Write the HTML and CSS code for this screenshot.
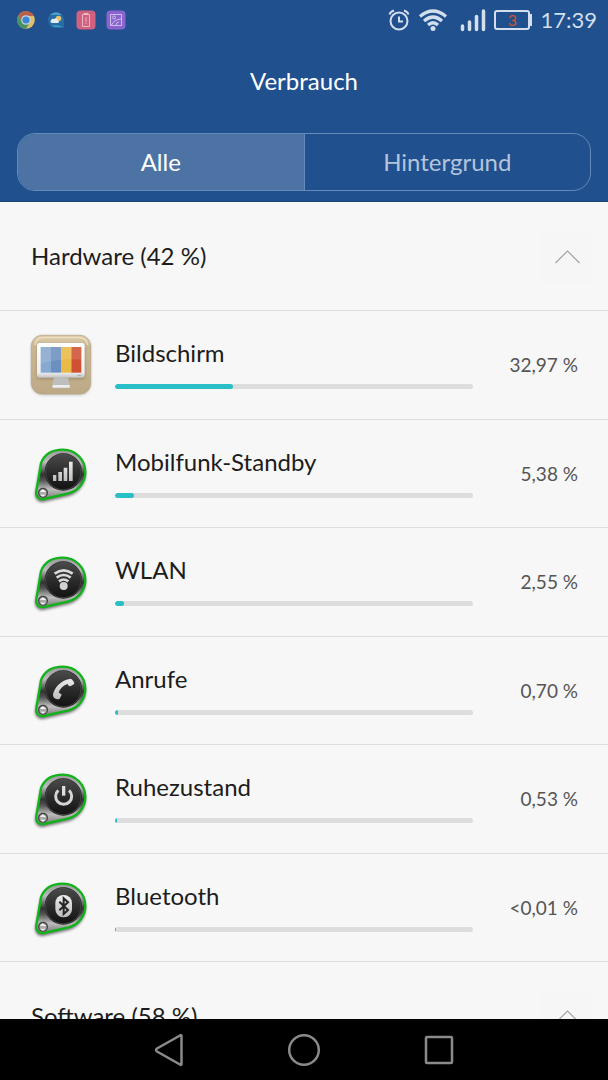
FILE: index.html
```html
<!DOCTYPE html>
<html lang="de">
<head>
<meta charset="utf-8">
<meta name="viewport" content="width=device-width, initial-scale=1">
<title>Verbrauch</title>
<link rel="stylesheet" href="styles.css">
</head>
<body>
<svg class="defs" aria-hidden="true">
  <defs>
    <linearGradient id="metal" x1="0" y1="0" x2="0" y2="1">
      <stop offset="0" stop-color="#999"/><stop offset=".25" stop-color="#bbb"/><stop offset=".5" stop-color="#333"/><stop offset=".62" stop-color="#555"/><stop offset=".8" stop-color="#bdbdbd"/><stop offset="1" stop-color="#777"/>
    </linearGradient>
    <linearGradient id="face" x1="0" y1="0" x2="0" y2="1">
      <stop offset="0" stop-color="#4a4a4a"/><stop offset=".5" stop-color="#2c2c2c"/><stop offset="1" stop-color="#121212"/>
    </linearGradient>
    <linearGradient id="glyph" x1="0" y1="0" x2="0" y2="1">
      <stop offset="0" stop-color="#ececec"/><stop offset="1" stop-color="#bcbcbc"/>
    </linearGradient>
    <linearGradient id="wood" x1="0" y1="0" x2="0" y2="1">
      <stop offset="0" stop-color="#e0cfad"/><stop offset=".2" stop-color="#c9b794"/><stop offset="1" stop-color="#bda985"/>
    </linearGradient>
    <linearGradient id="frame" x1="0" y1="0" x2="0" y2="1">
      <stop offset="0" stop-color="#fff"/><stop offset=".85" stop-color="#eee"/><stop offset="1" stop-color="#c4c4c4"/>
    </linearGradient>
    <filter id="soft" x="-20%" y="-20%" width="140%" height="140%"><feGaussianBlur stdDeviation="5"/></filter>
    <symbol id="drop" viewBox="0 0 240 240">
      <path d="M62 86C73 59 98 46 129 46C168 46 197 76 197 114C197 145 176 173 145 182L70 199C53 201 43 188 46 172Z" fill="#000" opacity=".55" filter="url(#soft)" transform="translate(0 5)"/>
      <path d="M63 88C73 61 98 47 129 47C167 47 196 77 196 114C196 144 176 170 145 178L72 195C56 198 46 188 49 172Z" fill="url(#metal)" stroke="#10b41a" stroke-width="7"/>
      <circle cx="130" cy="114" r="56" fill="#222"/>
      <circle cx="130" cy="114" r="53" fill="url(#face)" stroke="#555" stroke-width="2"/>
      <circle cx="69" cy="176" r="15" fill="#404040"/>
      <circle cx="69" cy="177" r="11" fill="#aaa"/>
      <path d="M60 174l8-8 11 9-11-2z" fill="#fff"/><path d="M61 182h15l-7 6z" fill="#f4f4f4"/>
    </symbol>
    <symbol id="chevron" viewBox="0 0 53 53">
      <path d="M14.500 33L26.500 21L38.500 33" fill="none" stroke="#a5a5a5" stroke-width="1.200"/>
    </symbol>
  </defs>
</svg>

<header class="header">
  <div class="status">
    <div class="status-apps">
      <svg viewBox="0 0 20 20" class="app-icon">
        <circle cx="10" cy="10" r="8.800" fill="#dfc068"/>
        <path d="M2.200 5.500A8.800 8.800 0 0 1 17.800 6H10L6.100 12.300Z" fill="#b96149"/>
        <path d="M2.200 5.500A8.800 8.800 0 0 0 10 18.800L13.900 12.300H6.100Z" fill="#4a9361"/>
        <circle cx="10" cy="10" r="4.800" fill="#c4d4e4"/><circle cx="10" cy="10" r="3.600" fill="#3c86d2"/>
      </svg>
      <svg viewBox="0 0 20 20" class="app-icon">
        <path d="M10 2A8 8 0 1 0 10 18H18V10A8 8 0 0 0 10 2Z" fill="#246da5"/>
        <path d="M4 5Q10 0 16 5Q10 4 4 5Z" fill="#58add5"/>
        <path d="M5 16Q11 14 17 17H9Z" fill="#3ba3ca"/>
        <circle cx="12.500" cy="8.500" r="2.800" fill="#e8c468"/>
        <path d="M6 13Q3.500 12 5 10.500Q5.500 8 8 9Q11 7 12 10.500Q14 12 12 13Z" fill="#e4edf5"/>
      </svg>
      <svg viewBox="0 0 20 20" class="app-icon">
        <rect x=".5" y=".5" width="19" height="19" rx="4" fill="#d0627f"/>
        <path d="M8 4.500V3.500H12V4.500M6.500 4.500H13.500V16.500H6.500ZM10 7.500V12M10 13V14" fill="none" stroke="#e9b6c3"/>
      </svg>
      <svg viewBox="0 0 20 20" class="app-icon">
        <rect x=".5" y=".5" width="19" height="19" rx="4" fill="#8b63ce"/>
        <path d="M4.500 4.500H15.500V15.500H4.500ZM5.500 15Q8 9.500 15 9M10 15Q10.500 12 13 12" fill="none" stroke="#cdbdea"/><circle cx="8" cy="7.500" r="1.500" fill="#8b63ce" stroke="#cdbdea"/>
      </svg>
    </div>
    <div class="status-info">
      <svg viewBox="0 0 22 24" class="alarm">
        <g fill="none" stroke="#d3dfec" stroke-width="2"><circle cx="11" cy="13" r="8.500"/><path d="M11 8.500V13.500H15M1.500 6.500Q2.500 3.500 6 2.500M20.500 6.500Q19.500 3.500 16 2.500"/></g>
      </svg>
      <svg viewBox="0 0 30 24" class="wifi">
        <g fill="none" stroke="#d3dfec" stroke-width="3.200"><path d="M2 8.500Q15-2.500 28 8.500M6 13Q15 5 24 13M10 17Q15 12.500 20 17"/></g><circle cx="15" cy="20.500" r="2.500" fill="#d3dfec"/>
      </svg>
      <svg viewBox="0 0 26 24" class="signal">
        <path d="M2.500 18V21.500M9.500 14V21.500M16.500 8.500V21.500M23.500 3V21.500" stroke="#d3dfec" stroke-width="3.500" stroke-linecap="round"/>
      </svg>
      <span class="battery"><span class="battery-level">3</span></span>
      <time class="clock">17:39</time>
    </div>
  </div>
  <h1 class="title">Verbrauch</h1>
  <div class="tabs" role="tablist">
    <button class="tab tab-active" type="button" role="tab" aria-selected="true">Alle</button>
    <button class="tab" type="button" role="tab" aria-selected="false">Hintergrund</button>
  </div>
</header>

<main class="content">
  <section>
    <div class="group">
      <h2 class="group-title">Hardware (42 %)</h2>
      <button class="toggle" type="button" aria-label="Hardware einklappen"><svg viewBox="0 0 53 53"><use href="#chevron"/></svg></button>
    </div>
    <ul class="list">
      <li class="row">
        <svg class="icon" viewBox="0 0 240 240">
          <rect x="34" y="33" width="178" height="177" rx="34" fill="#777" opacity=".45" filter="url(#soft)"/>
          <rect x="34" y="31" width="178" height="176" rx="32" fill="url(#wood)" stroke="#b5a27e" stroke-width="2"/>
          <path d="M45 60Q48 38 70 38H176Q200 38 203 60" fill="none" stroke="#eee0c2" stroke-width="4"/>
          <rect x="52" y="58" width="143" height="104" rx="8" fill="#77684b" opacity=".5" filter="url(#soft)"/>
          <path d="M102 158H144L150 184Q152 190 144 190H102Q94 190 97 184Z" fill="#bebebe"/><path d="M98 180H149V188H98Z" fill="#eee"/>
          <rect x="51" y="54" width="143" height="104" rx="8" fill="url(#frame)"/>
          <path d="M62 66H93V143H62Z" fill="#87a8d0"/><path d="M93 66H123V143H93Z" fill="#6b8fc0"/><path d="M123 66H154V143H123Z" fill="#e9ba45"/><path d="M154 66H184V143H154Z" fill="#cf5133"/>
          <path d="M62 66H184V104Q120 98 62 116Z" fill="#fff" opacity=".12"/><path d="M172 151H184" stroke="#aaa" stroke-width="3"/>
        </svg>
        <div class="usage"><label class="name" for="p1">Bildschirm</label><progress class="bar" id="p1" max="100" value="32.97"></progress></div>
        <span class="value">32,97 %</span>
      </li>
      <li class="row">
        <svg class="icon" viewBox="0 0 240 240"><use href="#drop"/><path d="M99 123H109V141H99ZM115 114H126V141H115ZM131 101H142V141H131ZM147 83H158V141H147Z" fill="url(#glyph)"/></svg>
        <div class="usage"><label class="name" for="p2">Mobilfunk-Standby</label><progress class="bar" id="p2" max="100" value="5.38"></progress></div>
        <span class="value">5,38 %</span>
      </li>
      <li class="row">
        <svg class="icon" viewBox="0 0 240 240"><use href="#drop"/><g fill="none" stroke="#dadada" stroke-width="8"><path d="M104 95Q131 75 158 95M110 107Q131 91 152 107M117 118Q131 107 145 118"/></g><circle cx="131" cy="132" r="12" fill="#d2d2d2"/></svg>
        <div class="usage"><label class="name" for="p3">WLAN</label><progress class="bar" id="p3" max="100" value="2.55"></progress></div>
        <span class="value">2,55 %</span>
      </li>
      <li class="row">
        <svg class="icon" viewBox="0 0 240 240"><use href="#drop"/><path d="M139 86L152 83Q157 84 163 96Q162 102 150 106Q145 106 143 99Q123 105 116 125Q122 126 125 131L119 143Q112 147 103 141Q97 136 100 126C106 108 120 93 139 86Z" fill="url(#glyph)"/></svg>
        <div class="usage"><label class="name" for="p4">Anrufe</label><progress class="bar" id="p4" max="100" value="0.70"></progress></div>
        <span class="value">0,70 %</span>
      </li>
      <li class="row">
        <svg class="icon" viewBox="0 0 240 240"><use href="#drop"/><path d="M115 94A24 24 0 1 0 147 94" fill="none" stroke="#d4d4d4" stroke-width="9"/><path d="M131 81V110" stroke="#dedede" stroke-width="10"/></svg>
        <div class="usage"><label class="name" for="p5">Ruhezustand</label><progress class="bar" id="p5" max="100" value="0.53"></progress></div>
        <span class="value">0,53 %</span>
      </li>
      <li class="row">
        <svg class="icon" viewBox="0 0 240 240"><use href="#drop"/><rect x="106" y="81" width="50" height="67" rx="24" fill="url(#glyph)"/><path d="M118 101L144 126L131 138V91L144 103L118 127" fill="none" stroke="#252525" stroke-width="6"/></svg>
        <div class="usage"><label class="name" for="p6">Bluetooth</label><progress class="bar" id="p6" max="100" value="0.3"></progress></div>
        <span class="value">&lt;0,01 %</span>
      </li>
    </ul>
  </section>
  <section>
    <div class="group">
      <h2 class="group-title">Software (58 %)</h2>
      <button class="toggle" type="button" aria-label="Software einklappen"><svg viewBox="0 0 53 53"><use href="#chevron"/></svg></button>
    </div>
  </section>
</main>

<nav class="navbar" aria-label="System">
  <button class="nav-button" type="button" aria-label="Zurück"><svg viewBox="0 0 36 36"><path d="M30.500 4V32Q30.500 33.500 29 32.500L6 19.500Q4 18 6 16.500L29 3.500Q30.500 2.500 30.500 4Z"/></svg></button>
  <button class="nav-button" type="button" aria-label="Start"><svg viewBox="0 0 36 36"><circle cx="18" cy="18" r="14.800"/></svg></button>
  <button class="nav-button" type="button" aria-label="Letzte Apps"><svg viewBox="0 0 36 36"><rect x="5" y="5" width="26" height="26" rx="1"/></svg></button>
</nav>
</body>
</html>
```

FILE: styles.css
```css
* {
  box-sizing: border-box;
}

body {
  margin: 0;
  height: 100vh;
  display: flex;
  flex-direction: column;
  font-family: Lato, "Liberation Sans", sans-serif;
  font-size: 24px;
  line-height: 30px;
  color: #1c1c1c;
  background: #f7f7f7;
}

button {
  margin: 0;
  padding: 0;
  border: 0;
  background: none;
  color: inherit;
  font: inherit;
}

svg {
  display: block;
}

.defs {
  position: absolute;
  width: 0;
  height: 0;
}

.header {
  flex: none;
  padding-bottom: 10px;
  border-bottom: 1px solid #194679;
  background: #20508e;
}

.status {
  height: 40px;
  padding: 0 11px 0 16px;
  display: flex;
  align-items: center;
  justify-content: space-between;
}

.status-apps {
  display: flex;
  gap: 10px;
}

.app-icon {
  width: 20px;
  height: 20px;
}

.status-info {
  display: flex;
  align-items: center;
  gap: 8px;
}

.alarm {
  width: 22px;
  height: 24px;
}

.wifi {
  width: 30px;
  height: 24px;
}

.signal {
  width: 26px;
  height: 24px;
  margin-left: 4px;
}

.battery {
  width: 38px;
  height: 20px;
  display: flex;
  align-items: center;
  border-right: 2px solid #d3dfec;
  border-image: linear-gradient(transparent 25%, #d3dfec 25%, #d3dfec 75%, transparent 75%) 1;
}

.battery-level {
  flex: 1;
  border: 2px solid #d3dfec;
  border-radius: 3px;
  color: #d0502d;
  font-size: 16px;
  line-height: 16px;
  text-align: center;
}

.clock {
  color: #d3dfec;
  font-size: 22px;
}

.title {
  margin: 0;
  padding: 26px 0 37px;
  color: #fff;
  font-size: 24px;
  font-weight: 400;
  text-align: center;
}

.tabs {
  margin: 0 17px;
  height: 58px;
  display: flex;
  overflow: hidden;
  border: 1px solid #638ab8;
  border-radius: 18px;
}

.tab {
  flex: 1;
  color: #b3c5db;
}

.tab-active {
  border-right: 1px solid #638ab8;
  color: #fff;
  background: #4d73a5;
}

.content {
  flex: 1;
  min-height: 0;
  overflow-y: auto;
  scrollbar-width: none;
}

.group {
  min-height: 109px;
  padding: 0 14px 0 31px;
  display: flex;
  align-items: center;
  justify-content: space-between;
  border-bottom: 1px solid #dedede;
}

.group-title {
  margin: 0;
  font-size: 24px;
  font-weight: 400;
}

.toggle {
  width: 53px;
  height: 53px;
  background: #f6f6f6;
}

.list {
  margin: 0;
  padding: 0;
  list-style: none;
}

.row {
  min-height: 109px;
  padding: 0 30px 0 20px;
  display: flex;
  align-items: center;
  border-bottom: 1px solid #dedede;
}

.row:nth-child(even) {
  min-height: 108px;
}

.icon {
  flex: none;
  width: 80px;
  height: 80px;
  margin-right: 15px;
}

.usage {
  flex: 1;
  padding-bottom: 3px;
  display: flex;
  flex-direction: column;
  gap: 16px;
}

.bar {
  width: 100%;
  height: 5px;
  overflow: hidden;
  appearance: none;
  border: 0;
  border-radius: 3px;
  background: #ddd;
}

.bar::-webkit-progress-bar {
  background: #ddd;
}

.bar::-webkit-progress-value {
  border-radius: 3px;
  background: #28c0c6;
}

.bar::-moz-progress-bar {
  border-radius: 3px;
  background: #28c0c6;
}

.value {
  flex: none;
  width: 105px;
  color: #555;
  font-size: 19px;
  text-align: right;
}

.navbar {
  flex: none;
  height: 61px;
  display: flex;
  align-items: center;
  justify-content: center;
  gap: 99px;
  background: #000;
}

.nav-button svg {
  width: 36px;
  height: 36px;
  fill: none;
  stroke: #8a8a8a;
  stroke-width: 2.5px;
}
```
